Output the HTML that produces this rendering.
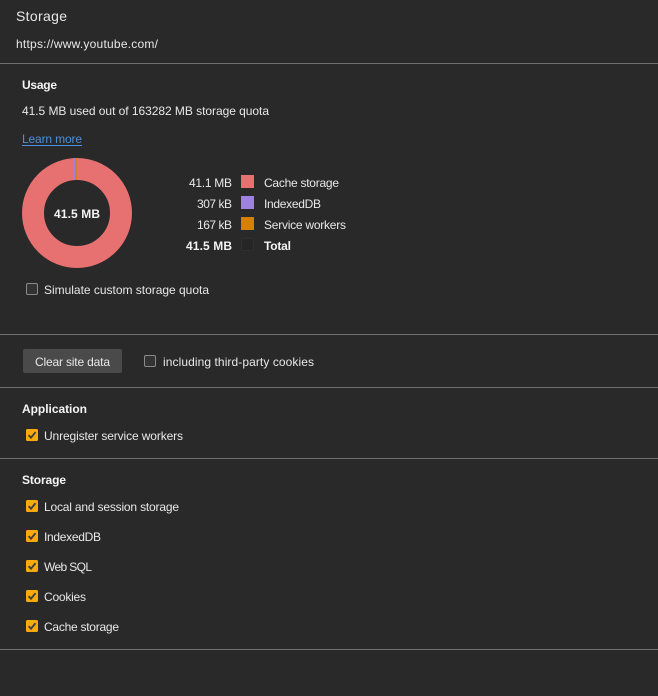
<!DOCTYPE html>
<html><head><meta charset="utf-8"><style>
html,body{margin:0;padding:0;background:#292929;width:658px;height:696px;overflow:hidden}
svg{display:block}
text{font-family:"Liberation Sans",sans-serif;font-size:12px;fill:#e8e8e8}
.b{font-weight:bold;fill:#f4f4f4}
.l{fill:#6f6f6f}
</style></head><body>
<svg width="658" height="696" viewBox="0 0 658 696" xmlns="http://www.w3.org/2000/svg">
<defs>
<g id="on"><rect x="0" y="0" width="12" height="12" rx="1.5" fill="#fba90c"/><path d="M2.6 6.2L5 8.7L9.5 3.2" fill="none" stroke="#3f3f3f" stroke-width="1.9"/></g>
<g id="off"><rect x=".5" y=".5" width="11" height="11" rx="1.5" fill="#333" stroke="#8a8a8a"/></g>
</defs>
<rect width="658" height="696" fill="#292929"/>
<text x="16" y="21" style="font-size:14px" textLength="51" lengthAdjust="spacing">Storage</text>
<text x="16" y="48" textLength="142" lengthAdjust="spacing">https://www.youtube.com/</text>
<rect class="l" x="0" y="63" width="658" height="1"/>
<text class="b" x="22" y="89" textLength="35" lengthAdjust="spacing">Usage</text>
<text x="22" y="115" textLength="247" lengthAdjust="spacing">41.5 MB used out of 163282 MB storage quota</text>
<text x="22" y="143" style="fill:#4c8fdc" textLength="60" lengthAdjust="spacing">Learn more</text>
<rect x="22" y="145" width="60" height="1" fill="#4c8fdc"/>

<circle cx="77" cy="213" r="44" fill="none" stroke="#e77070" stroke-width="22"/>
<rect x="73.3" y="158" width="2" height="22" fill="#9d82e0"/>
<rect x="75.3" y="158" width="1.3" height="22" fill="#d68000"/>
<text class="b" x="54" y="218" textLength="46" lengthAdjust="spacing">41.5 MB</text>

<text x="189" y="187" textLength="43" lengthAdjust="spacing">41.1 MB</text>
<text x="197" y="208" textLength="35" lengthAdjust="spacing">307 kB</text>
<text x="197" y="229" textLength="35" lengthAdjust="spacing">167 kB</text>
<text class="b" x="186" y="250" textLength="46" lengthAdjust="spacing">41.5 MB</text>
<rect x="241" y="175" width="13" height="13" fill="#e77070"/>
<rect x="241" y="196" width="13" height="13" fill="#9d82e0"/>
<rect x="241" y="217" width="13" height="13" fill="#d68000"/>
<rect x="241.5" y="238.5" width="12" height="12" fill="#262626" stroke="#2f2f2f"/>
<text x="264" y="187" textLength="75" lengthAdjust="spacing">Cache storage</text>
<text x="264" y="208" textLength="57" lengthAdjust="spacing">IndexedDB</text>
<text x="264" y="229" textLength="82" lengthAdjust="spacing">Service workers</text>
<text class="b" x="264" y="250" textLength="27" lengthAdjust="spacing">Total</text>

<use href="#off" x="26" y="283"/>
<text x="44" y="294" textLength="165" lengthAdjust="spacing">Simulate custom storage quota</text>
<rect class="l" x="0" y="334" width="658" height="1"/>

<rect x="23" y="349" width="99" height="24" rx="2" fill="#4a4a4a"/>
<text x="35" y="366" textLength="75" lengthAdjust="spacing">Clear site data</text>
<use href="#off" x="144" y="355"/>
<text x="163" y="366" textLength="151" lengthAdjust="spacing">including third-party cookies</text>
<rect class="l" x="0" y="387" width="658" height="1"/>

<text class="b" x="22" y="413" textLength="65" lengthAdjust="spacing">Application</text>
<use href="#on" x="26" y="429"/>
<text x="44" y="440" textLength="139" lengthAdjust="spacing">Unregister service workers</text>
<rect class="l" x="0" y="458" width="658" height="1"/>

<text class="b" x="22" y="484" textLength="44" lengthAdjust="spacing">Storage</text>
<use href="#on" x="26" y="500"/>
<text x="44" y="511" textLength="135" lengthAdjust="spacing">Local and session storage</text>
<use href="#on" x="26" y="530"/>
<text x="44" y="541" textLength="57" lengthAdjust="spacing">IndexedDB</text>
<use href="#on" x="26" y="560"/>
<text x="44" y="571" textLength="48" lengthAdjust="spacing">Web SQL</text>
<use href="#on" x="26" y="590"/>
<text x="44" y="601" textLength="42" lengthAdjust="spacing">Cookies</text>
<use href="#on" x="26" y="620"/>
<text x="44" y="631" textLength="75" lengthAdjust="spacing">Cache storage</text>
<rect class="l" x="0" y="649" width="658" height="1"/>
</svg>
</body></html>
